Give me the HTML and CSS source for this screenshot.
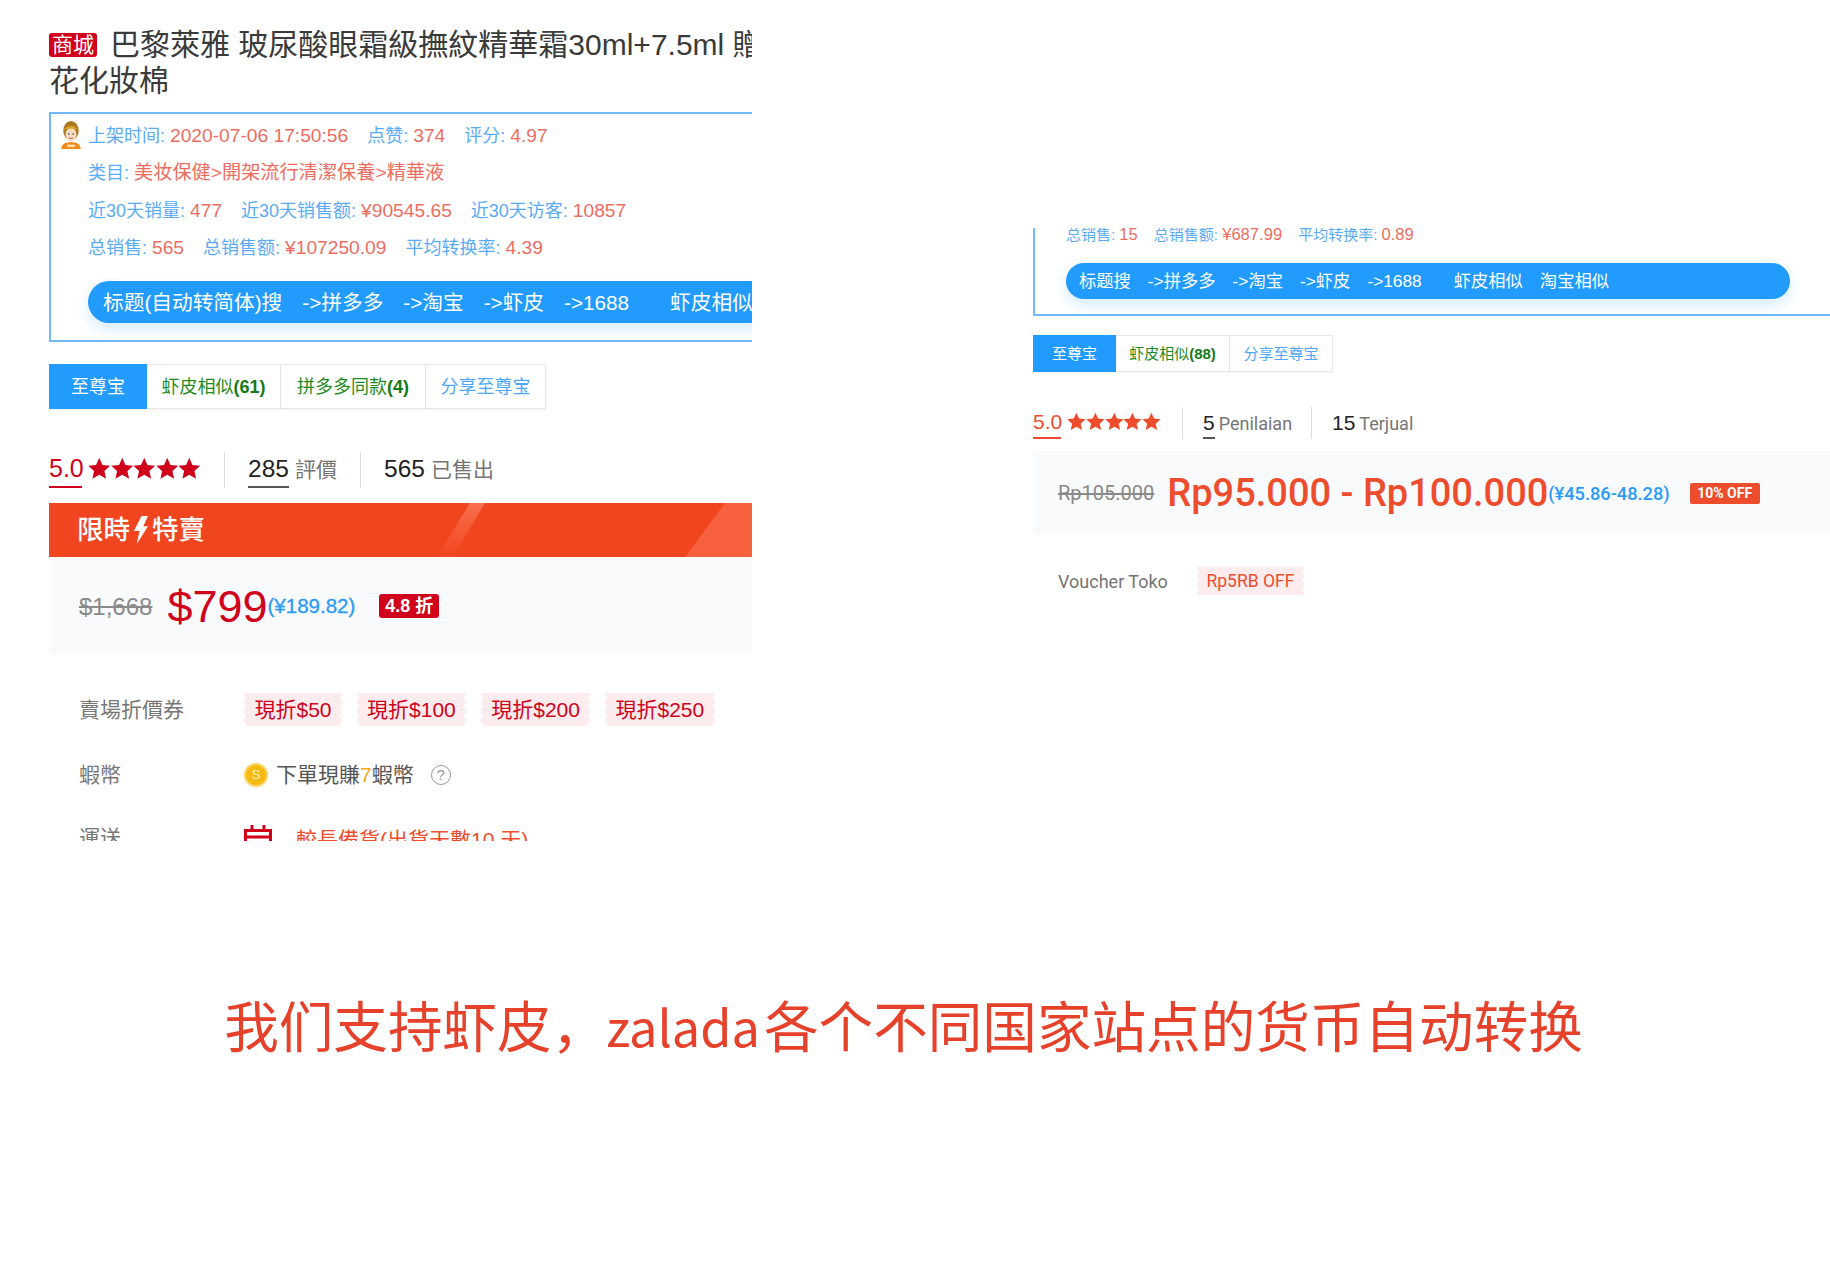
FILE: index.html
```html
<!DOCTYPE html>
<html lang="zh">
<head>
<meta charset="utf-8">
<title>货币自动转换</title>
<link rel="stylesheet" href="styles.css">
</head>
<body>
<svg class="defs" width="0" height="0"><symbol id="star" viewBox="0 0 24 24"><path d="M12 .8l3.4 7.6 8.3.9-6.2 5.6 1.8 8.2L12 18.900l-7.3 4.2 1.8-8.2L.3 9.300l8.3-.9z"/></symbol></svg>
<div class="panels">
  <section class="left">
    <h1 class="title"><span class="mall">商城</span>巴黎萊雅 玻尿酸眼霜級撫紋精華霜30ml+7.5ml 贈櫻<br>花化妝棉</h1>
    <div class="box">
      <div class="row first">
        <svg class="avatar" viewBox="0 0 24 30"><path d="M2 30c0-5 4-7 10-7s10 2 10 7z" fill="#f28a1c"/><ellipse cx="12" cy="11" rx="8" ry="10" fill="#a9781f"/><ellipse cx="12" cy="15" rx="5.600" ry="7" fill="#f9dcc0"/><path d="M5 10c2-5 12-5 14 0-3-1.400-11-1.400-14 0z" fill="#d8a52c"/><circle cx="9.800" cy="14.500" r=".8" fill="#333"/><circle cx="14.200" cy="14.500" r=".8" fill="#333"/><path d="M10 18.500c1.200.8 2.800.8 4 0" stroke="#b55" fill="none"/><rect x="8" y="25.500" width="8" height="2.500" fill="#ffe3b0"/></svg>
        <span><i class="k">上架时间:</i> <i class="v">2020-07-06 17:50:56</i></span><span><i class="k">点赞:</i> <i class="v">374</i></span><span><i class="k">评分:</i> <i class="v">4.97</i></span>
      </div>
      <div class="row"><span><i class="k">类目:</i> <i class="v">美妆保健&gt;開架流行清潔保養&gt;精華液</i></span></div>
      <div class="row"><span><i class="k">近30天销量:</i> <i class="v">477</i></span><span><i class="k">近30天销售额:</i> <i class="v">¥90545.65</i></span><span><i class="k">近30天访客:</i> <i class="v">10857</i></span></div>
      <div class="row"><span><i class="k">总销售:</i> <i class="v">565</i></span><span><i class="k">总销售额:</i> <i class="v">¥107250.09</i></span><span><i class="k">平均转换率:</i> <i class="v">4.39</i></span></div>
      <div class="pill"><span>标题(自动转简体)搜</span><span>-&gt;拼多多</span><span>-&gt;淘宝</span><span>-&gt;虾皮</span><span>-&gt;1688</span><span class="wide">虾皮相似</span><span>淘宝相似</span></div>
    </div>
    <div class="tabs">
      <span class="tab on">至尊宝</span><span class="tab green">虾皮相似<b>(61)</b></span><span class="tab green">拼多多同款<b>(4)</b></span><span class="tab blue">分享至尊宝</span>
    </div>
    <div class="rating">
      <span class="score">5.0</span>
      <span class="stars"><svg><use href="#star"/></svg><svg><use href="#star"/></svg><svg><use href="#star"/></svg><svg><use href="#star"/></svg><svg><use href="#star"/></svg></span>
      <span class="stat"><em class="num under">285</em><span class="lbl">評價</span></span>
      <span class="stat"><em class="num">565</em><span class="lbl">已售出</span></span>
    </div>
    <div class="flash">
      <svg class="flash-bg" viewBox="0 0 703 54"><defs><linearGradient id="fade" x1="0" y1="0" x2="0" y2="1"><stop offset="0" stop-color="#f8704c"/><stop offset="1" stop-color="#f1451f"/></linearGradient></defs><polygon points="421,0 436,0 404,54 388,54" fill="url(#fade)"/><polygon points="676,0 703,0 703,54 636,54" fill="#f6603c"/></svg>
      <span class="flash-text">限時<svg class="bolt" viewBox="0 0 16 30"><path d="M9 0h7L11 11h5L4 30l3-14H1z" fill="#fff"/></svg>特賣</span>
    </div>
    <div class="price">
      <s class="old">$1,668</s><span class="now">$799</span><span class="cny">(¥189.82)</span><span class="off">4.8 折</span>
    </div>
    <div class="line vouchers">
      <span class="label">賣場折價券</span>
      <div class="tickets"><span class="ticket">現折$50</span><span class="ticket">現折$100</span><span class="ticket">現折$200</span><span class="ticket">現折$250</span></div>
    </div>
    <div class="line coins">
      <span class="label">蝦幣</span>
      <span class="coin">S</span><span class="earn">下單現賺<b>7</b>蝦幣</span><span class="help">?</span>
    </div>
    <div class="line ship">
      <span class="label">運送</span>
      <svg class="cal" viewBox="0 0 28 24"><path d="M1.500 6.500h25v15h-25zM1.500 13h25M8 1v6M20 1v6" fill="none" stroke="#d0011b" stroke-width="3"/></svg>
      <span class="late">較長備貨(出貨天數10 天)</span>
    </div>
  </section>
  <section class="right">
    <div class="box2">
      <div class="row2"><span><i class="k">总销售:</i> <i class="v">15</i></span><span><i class="k">总销售额:</i> <i class="v">¥687.99</i></span><span><i class="k">平均转换率:</i> <i class="v">0.89</i></span></div>
      <div class="pill2"><span>标题搜</span><span>-&gt;拼多多</span><span>-&gt;淘宝</span><span>-&gt;虾皮</span><span>-&gt;1688</span><span class="wide2">虾皮相似</span><span>淘宝相似</span></div>
    </div>
    <div class="tabs2">
      <span class="tab2 on">至尊宝</span><span class="tab2 green">虾皮相似<b>(88)</b></span><span class="tab2 blue">分享至尊宝</span>
    </div>
    <div class="rating2">
      <span class="score2">5.0</span>
      <span class="stars2"><svg><use href="#star"/></svg><svg><use href="#star"/></svg><svg><use href="#star"/></svg><svg><use href="#star"/></svg><svg><use href="#star"/></svg></span>
      <span class="stat2"><em class="num2 under">5</em><span class="lbl2">Penilaian</span></span>
      <span class="stat2"><em class="num2">15</em><span class="lbl2">Terjual</span></span>
    </div>
    <div class="price2">
      <s class="old2">Rp105.000</s><span class="now2">Rp95.000 - Rp100.000</span><span class="cny2">(¥45.86-48.28)</span><span class="off2">10% OFF</span>
    </div>
    <div class="voucher2"><span class="label2">Voucher Toko</span><span class="ticket ticket2">Rp5RB OFF</span></div>
  </section>
</div>
<p class="caption">我们支持虾皮，<span class="brand">zalada</span>各个不同国家站点的货币自动转换</p>
</body>
</html>
```
FILE: styles.css
```css
* { box-sizing: border-box; }
html, body { margin: 0; padding: 0; height: 1272px; overflow: hidden; background: #fff; }
body { font-family: "Liberation Sans", "Noto Sans CJK TC", sans-serif; color: #333; }
i, em { font-style: normal; }
.defs { position: absolute; }
.panels { display: flex; align-items: flex-start; padding-left: 49px; }

/* left screenshot */
.left { width: 703px; height: 841px; overflow: hidden; padding-top: 27px; flex: none; }
.title { margin: 0; font-size: 30px; line-height: 36px; font-weight: 400; color: #3a3a3a; white-space: nowrap; }
.mall { display: inline-block; vertical-align: 3px; width: 48px; height: 24px; line-height: 24px; margin-right: 13px; background: #d0011b; color: #fff; font-size: 21px; text-align: center; border-radius: 3px; }
.box { margin-top: 13px; width: 760px; height: 230px; border: 2px solid #6fb9fb; padding: 3px 0 0 37px; }
.row { height: 37.300px; line-height: 37.300px; display: flex; gap: 19px; font-size: 18px; white-space: nowrap; position: relative; }
.k { color: #5aabf6; }
.v { color: #ee6d62; font-size: 19.200px; }
.avatar { position: absolute; left: -29px; top: 3px; width: 24px; height: 29px; }
.pill { margin-top: 15px; height: 42px; line-height: 44px; width: 760px; border-radius: 21px; background: #219cfe; color: #fff; font-size: 20.700px; display: flex; gap: 20px; padding-left: 15px; white-space: nowrap; box-shadow: 0 6px 14px rgba(33, 156, 254, .2); }
.wide { margin-left: 21px; }
.tabs { margin-top: 22px; display: flex; height: 45px; line-height: 44px; }
.tab { display: block; text-align: center; font-size: 18px; border: 1px solid #e8e8e8; border-left: 0; box-shadow: 0 1px 2px rgba(0, 0, 0, .06); white-space: nowrap; }
.tab:nth-child(1) { width: 98px; line-height: 46px; }
.tab:nth-child(2) { width: 134px; }
.tab:nth-child(3) { width: 145px; }
.tab:nth-child(4) { width: 120px; }
.tab.on { background: #219cfe; color: #fff; border: 0; }
.green { color: #1f8b24; }
.green b { color: #137a17; }
.blue { color: #4ea8f5; }
.rating { margin-top: 43px; height: 36px; display: flex; align-items: center; white-space: nowrap; }
.score { font-size: 25px; color: #d0011b; width: 33px; height: 36px; line-height: 33px; border-bottom: 2px solid #d0011b; }
.stars { display: flex; margin-left: 6px; width: 136px; margin-top: -4px; }
.stars svg { width: 22.500px; height: 22.500px; fill: #d0011b; flex: none; }
.stat { display: flex; align-items: baseline; height: 36px; line-height: 33px; width: 136px; padding-left: 23px; border-left: 1px solid #dcdcdc; }
.num { font-size: 24.500px; color: #222; }
.num.under { height: 36px; border-bottom: 2px solid #555; }
.lbl { font-size: 21px; color: #757575; margin-left: 6px; }
.flash { position: relative; margin-top: 15px; height: 54px; background: #f1451f; display: flex; align-items: center; padding-left: 28px; }
.flash-bg { position: absolute; inset: 0; width: 100%; height: 100%; }
.flash-text { position: relative; display: flex; align-items: center; height: 54px; line-height: 52px; color: #fff; font-size: 26.500px; font-weight: 500; }
.bolt { width: 15px; height: 28px; margin: 0 4px 0 3px; }
.price { height: 98px; background: #f9fafc; display: flex; align-items: center; padding-left: 30px; }
.old { font-size: 24px; color: #8a8a8a; margin-right: 15px; margin-top: 1px; }
.now { font-size: 45px; color: #d0011b; margin-top: 2px; }
.cny { font-size: 20.500px; color: #2a9bf5; -webkit-text-stroke: .3px #2a9bf5; }
.off { margin-left: 24px; margin-top: -1px; width: 60px; height: 24px; line-height: 24px; border-radius: 3px; background: #d0011b; color: #fff; font-size: 18px; font-weight: 700; text-align: center; }
.line { display: flex; align-items: center; height: 33px; line-height: 33px; padding-left: 30px; white-space: nowrap; }
.label { font-size: 21px; color: #777; width: 165px; flex: none; }
.vouchers { margin-top: 38px; }
.tickets { display: flex; gap: 14.500px; }
.ticket { display: block; height: 33px; line-height: 33px; padding: 0 10.500px; font-size: 21px; color: #d0011b; background-color: #fdeced; background-image: radial-gradient(circle at 0 50%, #fff 2px, transparent 2.500px), radial-gradient(circle at 100% 50%, #fff 2px, transparent 2.500px); background-size: 5px 9px, 5px 9px; background-position: left top, right top; background-repeat: repeat-y; }
.coins { margin-top: 32px; }
.coin { width: 24px; height: 24px; border-radius: 50%; background: #f5b90f; border: 2px solid #fad35e; color: #fff2c0; font-size: 13px; text-align: center; line-height: 20px; flex: none; }
.earn { font-size: 21px; color: #555; margin-left: 8px; }
.earn b { color: #f5a623; font-weight: 400; }
.help { margin-left: 17px; width: 20px; height: 20px; border: 1.500px solid #999; border-radius: 50%; font-size: 15px; line-height: 17px; text-align: center; color: #999; }
.ship { margin-top: 30px; }
.cal { width: 28px; height: 24px; flex: none; margin-top: -4px; }
.late { font-size: 21px; color: #ee4d2d; margin-left: 24px; margin-top: 3px; }

/* right screenshot */
.right { width: 797px; margin-left: 281px; margin-top: 228px; flex: none; overflow: hidden; }
.box2 { height: 88px; border-left: 2px solid #6fb9fb; border-bottom: 2px solid #6fb9fb; padding-left: 31px; }
.row2 { height: 14px; line-height: 14px; display: flex; gap: 16px; font-size: 15px; white-space: nowrap; }
.row2 .v { font-size: 16.600px; }
.pill2 { margin-top: 21px; width: 724px; height: 36px; line-height: 37px; border-radius: 18px; background: #219cfe; color: #fff; font-size: 17.300px; display: flex; gap: 17px; padding-left: 13px; white-space: nowrap; box-shadow: 0 6px 14px rgba(33, 156, 254, .2); }
.wide2 { margin-left: 15px; }
.tabs2 { margin-top: 19px; display: flex; height: 37px; line-height: 35px; }
.tab2 { display: block; text-align: center; font-size: 15px; border: 1px solid #e8e8e8; border-left: 0; box-shadow: 0 1px 2px rgba(0, 0, 0, .06); white-space: nowrap; }
.tab2:nth-child(1) { width: 83px; line-height: 37px; }
.tab2:nth-child(2) { width: 114px; }
.tab2:nth-child(3) { width: 103px; }
.tab2.on { background: #219cfe; color: #fff; border: 0; }
.rating2 { margin-top: 35px; height: 32px; display: flex; align-items: center; white-space: nowrap; }
.score2 { font-size: 21px; color: #ee4d2d; width: 28px; height: 32px; line-height: 30px; border-bottom: 2px solid #ee4d2d; }
.stars2 { display: flex; margin-left: 6px; width: 115px; margin-top: -3px; }
.stars2 svg { width: 18.800px; height: 18.800px; fill: #ee4d2d; flex: none; }
.stat2 { display: flex; align-items: baseline; height: 32px; line-height: 31px; width: 129px; padding-left: 20px; border-left: 1px solid #dcdcdc; }
.num2 { font-size: 21px; color: #222; }
.num2.under { height: 32px; border-bottom: 2px solid #555; }
.lbl2 { font-size: 18px; color: #757575; margin-left: 4px; font-family: Roboto, sans-serif; }
.price2 { margin-top: 12px; height: 84px; background: #f9fafc; display: flex; align-items: center; padding-left: 25px; white-space: nowrap; font-family: Roboto, sans-serif; }
.old2 { font-size: 20px; color: #8a8a8a; margin-right: 13px; }
.now2 { font-size: 38px; color: #ee4d2d; font-weight: 500; }
.cny2 { font-size: 18.200px; color: #2a9bf5; font-weight: 500; }
.off2 { margin-left: 20px; width: 70px; height: 21px; line-height: 21px; border-radius: 2px; background: #ee4d2d; color: #fff; font-size: 14px; font-weight: 700; text-align: center; }
.voucher2 { margin-top: 32px; height: 28px; display: flex; align-items: center; padding-left: 25px; font-family: Roboto, sans-serif; }
.label2 { font-size: 18px; color: #757575; width: 139px; flex: none; }
.ticket2 { height: 28px; line-height: 28px; padding: 0 9.500px; font-size: 17.500px; color: #ee4d2d; }

.caption { margin: 148px 23px 0 0; text-align: center; font-size: 54.600px; line-height: 70px; color: #e5412b; font-family: "Noto Sans CJK SC", sans-serif; white-space: nowrap; }
.brand { font-size: 50.500px; margin-right: 4px; }
```
